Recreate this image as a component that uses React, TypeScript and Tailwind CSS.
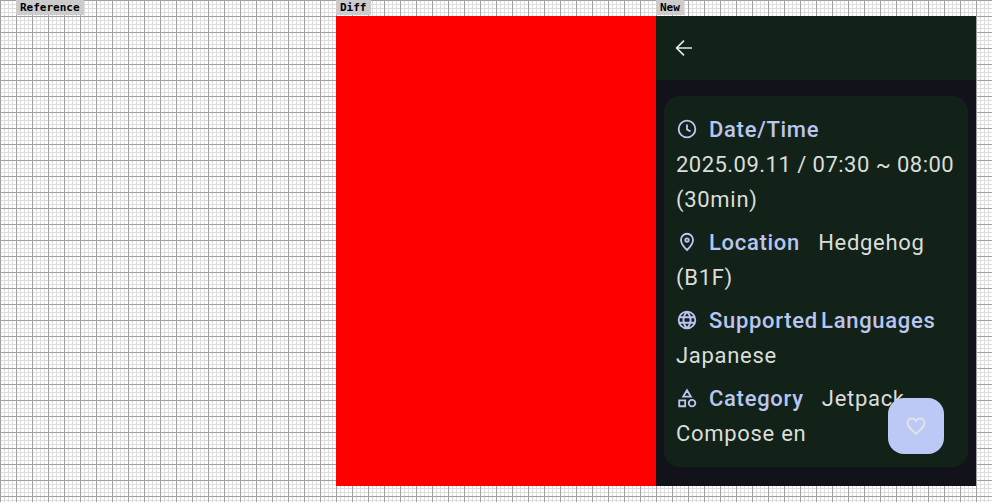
import React from "react";

function Glyph({ d, size = 22, width = 2 }: { d: string; size?: number; width?: number }) {
  return (
    <svg width={size} height={size} viewBox="0 0 24 24" fill="none" stroke="currentColor" strokeWidth={width}>
      <path d={d} />
    </svg>
  );
}

function Label({ children }: { children: React.ReactNode }) {
  return (
    <div className="h-4 flex">
      <span className="h-[15px] bg-[#cccccc] px-1 text-[11px] leading-[15px] font-bold text-black font-['DejaVu_Sans_Mono',monospace]">{children}</span>
    </div>
  );
}

function Row({ icon, label, children }: { icon: React.ReactNode; label: string; children: React.ReactNode }) {
  return (
    <p className="text-[22px] leading-[35px] tracking-[0.7px] text-[#dadeda]">
      <span className="inline-block w-[33px] h-[22px] align-[-3px] text-[#b9c6f2]">{icon}</span>
      <span className="font-medium mr-3 text-[#b9c6f2] [word-spacing:-3px]">{label}</span>{" "}
      {children}
    </p>
  );
}

export default function App() {
  return (
    <div className="w-[992px] h-[502px] overflow-hidden px-4 flex font-['Roboto',sans-serif] bg-[#ffffff] bg-[linear-gradient(#a0a0a0_1px,transparent_1px),linear-gradient(90deg,#a0a0a0_1px,transparent_1px),linear-gradient(#dddddd_1px,transparent_1px),linear-gradient(90deg,#dddddd_1px,transparent_1px)] bg-[size:16px_16px,16px_16px,4px_4px,4px_4px]">
      <div className="w-80 flex flex-col">
        <Label>Reference</Label>
      </div>
      <div className="w-80 flex flex-col">
        <Label>Diff</Label>
        <div className="h-[470px] bg-[#ff0000]" />
      </div>
      <div className="w-80 flex flex-col">
        <Label>New</Label>
        <div className="relative h-[470px] bg-[#12131a] flex flex-col overflow-hidden">
          <div className="h-16 bg-[#132218] flex items-center pl-4 text-[#e6e8e2]">
            <Glyph size={24} width={1.7} d="M20 12H5M12 4.6L4.6 12l7.4 7.4" />
          </div>
          <div className="mx-2 mt-4 rounded-2xl bg-[#132218] px-3 py-4 flex flex-col gap-2">
            <Row
              label="Date/Time"
              icon={<Glyph d="M12 2.9a9.1 9.1 0 1 0 0 18.2 9.1 9.1 0 0 0 0-18.2zM12 7v5.4l3.8 2.3" />}
            >
              <span className="tracking-[0.47px]">{"2025.09.11\u00a0/\u00a007:30\u00a0~\u00a008:00"}</span> (30min)
            </Row>
            <Row
              label="Location"
              icon={<Glyph d="M12 3a6.6 6.6 0 0 0-6.6 6.7c0 3.3 2.2 6.7 6.6 11 4.4-4.3 6.6-7.7 6.6-11A6.6 6.6 0 0 0 12 3zM12 8a1.9 1.9 0 1 0 0 3.8A1.9 1.9 0 0 0 12 8z" />}
            >
              Hedgehog (B1F)
            </Row>
            <Row
              label="Supported Languages"
              icon={<Glyph d="M12 2.9a9.1 9.1 0 1 0 0 18.2 9.1 9.1 0 0 0 0-18.2zM2.9 9h18.2M2.9 15h18.2M12 2.9c-5.2 5.5-5.2 12.7 0 18.2M12 2.9c5.2 5.5 5.2 12.7 0 18.2" />}
            >
              Japanese
            </Row>
            <Row
              label="Category"
              icon={<Glyph d="M12 3.5L7.8 10.5h8.4zM3.5 14.5h6.5v6.5H3.5zM17.5 14a3.6 3.6 0 1 0 0 7.2 3.6 3.6 0 0 0 0-7.2z" />}
            >
              Jetpack Compose en
            </Row>
          </div>
          <button className="absolute right-8 bottom-8 w-14 h-14 rounded-2xl bg-[#bcc8f5] flex items-center justify-center text-[#e0e3e4]">
            <Glyph size={24} d="M12 19.8C6.6 15 3.5 12.2 3.5 8.9 3.5 6.4 5.4 4.6 7.8 4.6c1.7 0 3.3.9 4.2 2.5.9-1.6 2.5-2.5 4.2-2.5 2.4 0 4.3 1.8 4.3 4.3 0 3.3-3.1 6.1-8.5 10.9z" />
          </button>
        </div>
      </div>
    </div>
  );
}
